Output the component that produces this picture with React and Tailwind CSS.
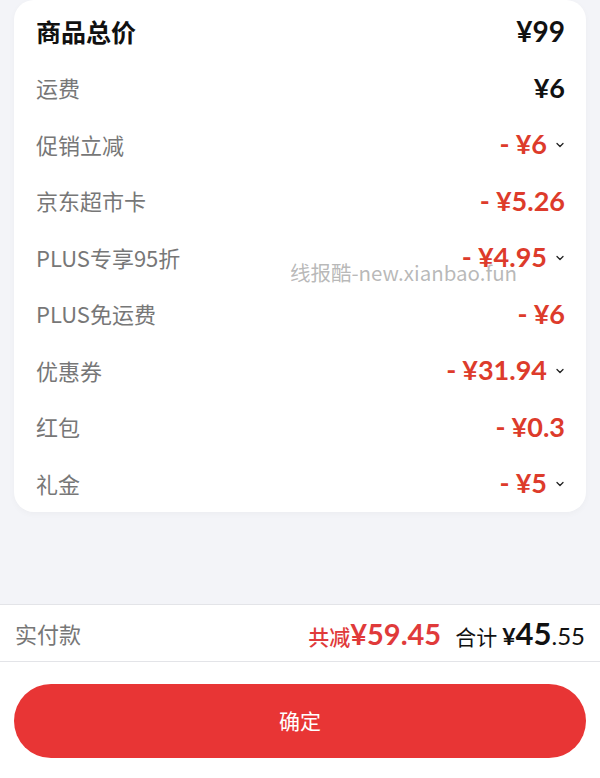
import React from "react";

const Chevron = () => (
  <svg width="10" height="10" viewBox="0 0 10 10" className="ml-[8px] mt-[2px]">
    <path d="M2 3.5 L5 6.5 L8 3.5" fill="none" stroke="#222" strokeWidth="1.3" strokeLinecap="round" strokeLinejoin="round" />
  </svg>
);

const rows = [
  { label: "运费", value: "¥6", red: false, chev: false },
  { label: "促销立减", value: "¥6", red: true, chev: true },
  { label: "京东超市卡", value: "¥5.26", red: true, chev: false },
  { label: "PLUS专享95折", value: "¥4.95", red: true, chev: true },
  { label: "PLUS免运费", value: "¥6", red: true, chev: false },
  { label: "优惠券", value: "¥31.94", red: true, chev: true },
  { label: "红包", value: "¥0.3", red: true, chev: false },
  { label: "礼金", value: "¥5", red: true, chev: true },
];

const cjk = { fontFamily: '"Noto Sans CJK SC", "Noto Sans", sans-serif' };
const num = { fontFamily: 'Lato, "Noto Sans CJK SC", sans-serif' };

export default function App() {
  return (
    <div className="w-[600px] h-[778px] bg-[#f3f4f8] flex flex-col overflow-hidden relative" style={cjk}>
      <div className="mx-[14px] bg-white rounded-[20px] pt-[3px] pr-[21px] pl-[22px] shadow-[0_2px_6px_rgba(0,0,0,0.03)]">
        <div className="h-[56.5px] flex items-center justify-between">
          <span className="text-[25px] font-bold text-[#111]">商品总价</span>
          <span className="text-[28px] font-bold text-[#111]" style={num}>¥99</span>
        </div>
        {rows.map((r) => (
          <div key={r.label} className="h-[56.5px] flex items-center justify-between">
            <span className="text-[22px] text-[#777]">{r.label}</span>
            <span className="flex items-center">
              {r.red ? (
                <span className="text-[27px] font-bold text-[#dd3b2b]" style={num}>
                  <span className="mr-[6px]">-</span>{r.value}
                </span>
              ) : (
                <span className="text-[27px] font-bold text-[#111]" style={num}>{r.value}</span>
              )}
              {r.chev && <Chevron />}
            </span>
          </div>
        ))}
      </div>

      <div className="absolute left-[290px] top-[257px] text-[20.5px] text-[#9a9a9a]/70" style={cjk}>
        线报酷-new.xianbao.fun
      </div>

      <div className="flex-1" />

      <div className="h-[58px] bg-white border-t border-b border-[#e3e4e8] flex items-center justify-between px-[15px] shrink-0">
        <span className="text-[22px] text-[#777]">实付款</span>
        <span className="flex items-baseline">
          <span className="text-[21px] font-medium text-[#e03a3a]">共减</span>
          <span className="text-[29px] font-bold text-[#e03a3a]" style={num}>¥59.45</span>
          <span className="text-[21px] text-[#111] ml-[14px]">合计</span>
          <span className="text-[23px] font-bold text-[#111] ml-[5px]" style={num}>¥</span>
          <span className="text-[31px] font-bold text-[#111]" style={num}>45</span>
          <span className="text-[24px] text-[#111]" style={num}>.55</span>
        </span>
      </div>

      <div className="bg-white h-[116px] shrink-0 px-[14px] pt-[22px]">
        <button className="w-full h-[74px] rounded-full bg-[#e83535] text-white text-[21px]" style={cjk}>
          确定
        </button>
      </div>
    </div>
  );
}
